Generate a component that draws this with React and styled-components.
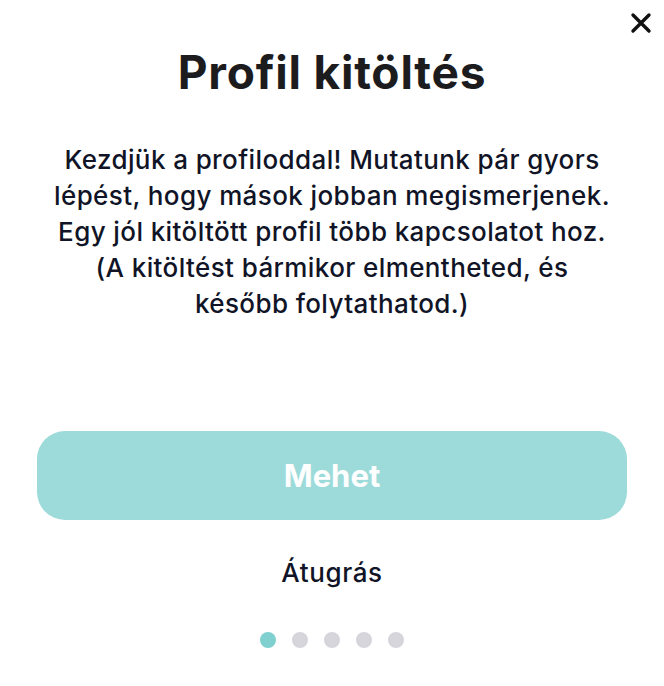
import React from "react"
import styled, { createGlobalStyle } from "styled-components"

const GlobalStyle = createGlobalStyle`
  html, body {
    margin: 0;
    padding: 0;
    background: #ffffff;
  }
  body {
    font-family: Inter, "Noto Sans", sans-serif;
    -webkit-font-smoothing: antialiased;
  }
`

const Modal = styled.div`
  position: relative;
  width: 664px;
  height: 686px;
  box-sizing: border-box;
  padding: 44px 37px 0;
  display: flex;
  flex-direction: column;
  align-items: center;
  background: #fff;
`

const CloseButton = styled.button`
  position: absolute;
  top: 10px;
  right: 10px;
  width: 26px;
  height: 26px;
  padding: 0;
  border: none;
  background: none;
  cursor: pointer;
  display: flex;
  align-items: center;
  justify-content: center;
`

const Title = styled.h1`
  margin: 0;
  font-size: 46px;
  line-height: 56px;
  font-weight: 700;
  color: #1c1c1e;
  letter-spacing: 0.8px;
`

const Description = styled.p`
  margin: 42px 0 0;
  font-size: 26px;
  line-height: 36px;
  font-weight: 500;
  color: #101426;
  text-align: center;
  letter-spacing: 0.4px;
`

const PrimaryButton = styled.button`
  margin-top: 109px;
  width: 100%;
  height: 89px;
  border: none;
  border-radius: 28px;
  background: #9ddbda;
  color: #ffffff;
  font-family: inherit;
  font-size: 31px;
  font-weight: 700;
  cursor: pointer;
`

const SkipButton = styled.button`
  margin-top: 35px;
  border: none;
  background: none;
  padding: 0;
  font-family: inherit;
  font-size: 26px;
  line-height: 36px;
  font-weight: 500;
  color: #101426;
  letter-spacing: 0.6px;
  cursor: pointer;
`

const Dots = styled.div`
  margin-top: 41px;
  display: flex;
  gap: 16px;
`

const Dot = styled.span`
  width: 16px;
  height: 16px;
  border-radius: 50%;
  background: ${(p) => (p.active ? "#80d0d0" : "#d5d5db")};
`

const CloseIcon = () => (
  <svg width="22" height="22" viewBox="0 0 22 22">
    <path
      d="M3 3 L19 19 M19 3 L3 19"
      stroke="#111"
      strokeWidth="3.4"
      strokeLinecap="round"
    />
  </svg>
)

const App = () => (
  <>
    <GlobalStyle />
    <Modal>
      <CloseButton aria-label="Bezárás">
        <CloseIcon />
      </CloseButton>
      <Title>Profil kitöltés</Title>
      <Description>
        Kezdjük a profiloddal! Mutatunk pár gyors
        <br />
        lépést, hogy mások jobban megismerjenek.
        <br />
        Egy jól kitöltött profil több kapcsolatot hoz.
        <br />
        (A kitöltést bármikor elmentheted, és
        <br />
        később folytathatod.)
      </Description>
      <PrimaryButton>Mehet</PrimaryButton>
      <SkipButton>Átugrás</SkipButton>
      <Dots>
        {[0, 1, 2, 3, 4].map((i) => (
          <Dot key={i} active={i === 0} />
        ))}
      </Dots>
    </Modal>
  </>
)

export default App
